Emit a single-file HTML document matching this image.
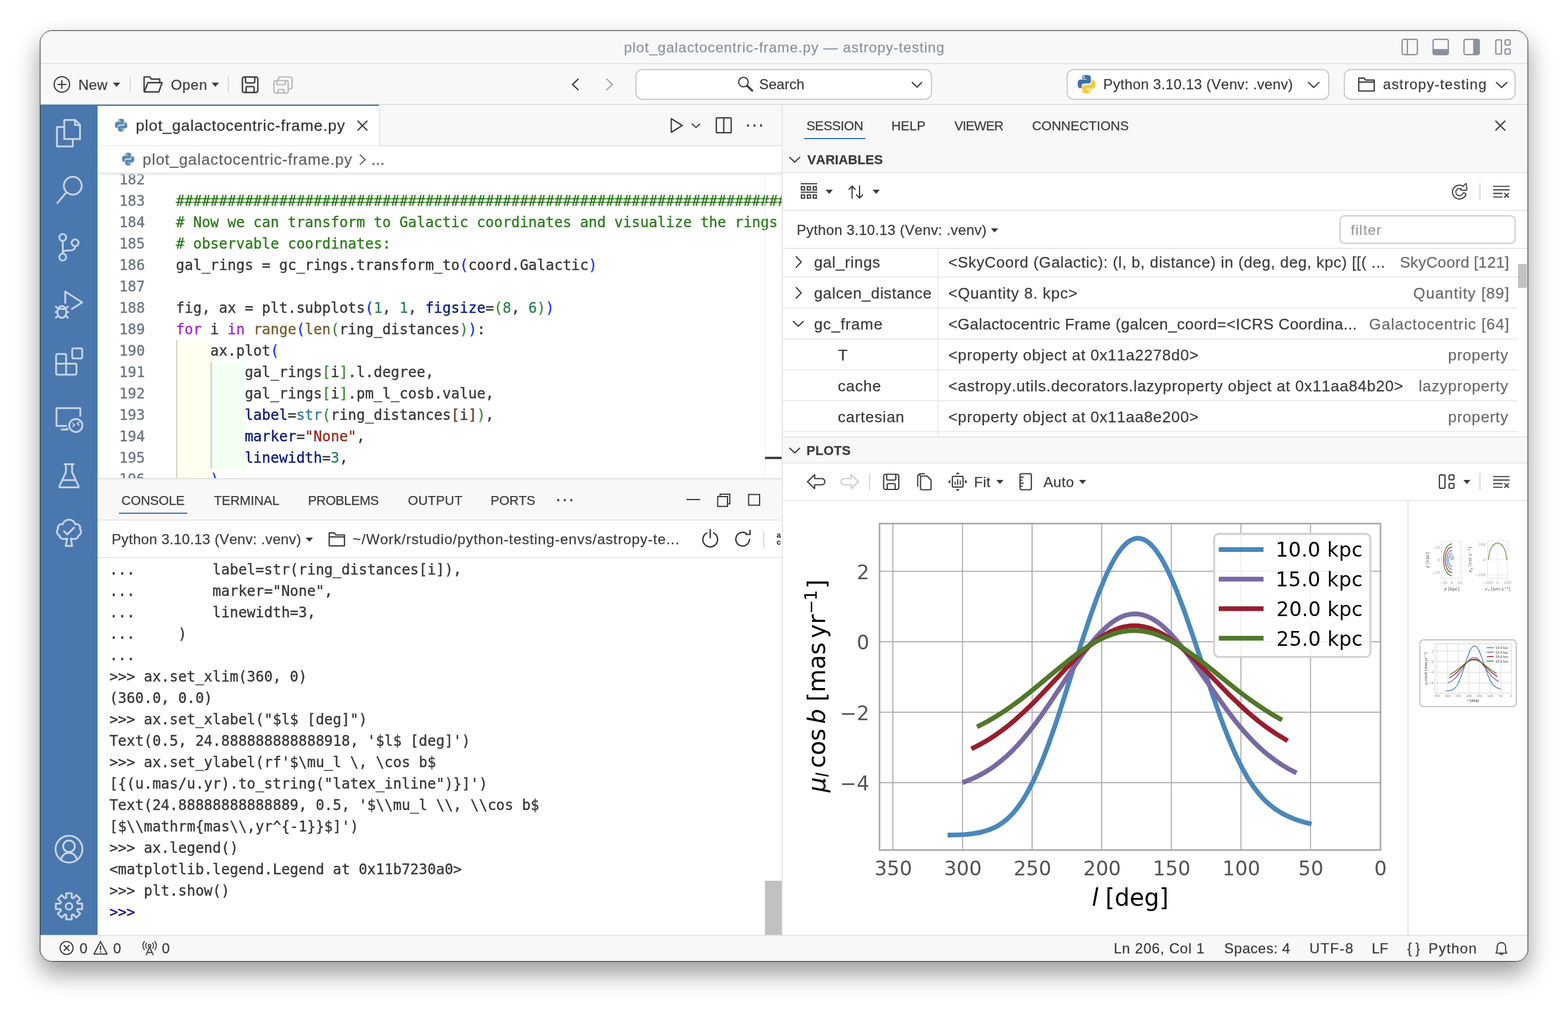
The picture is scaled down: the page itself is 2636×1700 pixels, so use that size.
<!DOCTYPE html>
<html lang="en"><head><meta charset="utf-8"><title>plot_galactocentric-frame.py — astropy-testing</title>
<style>
html,body{margin:0;padding:0;background:#fff;}
body{width:2636px;height:1700px;overflow:hidden;position:relative;font-family:"Liberation Sans",sans-serif;font-kerning:none;-webkit-font-smoothing:antialiased;}
#win{position:absolute;left:67px;top:51px;width:2500px;height:1564px;border:1px solid #2e2e2e;border-radius:21px;overflow:hidden;background:#f8f8f8;box-shadow:0 20px 40px rgba(0,0,0,0.40),0 0 3px rgba(0,0,0,0.15);}
#pg{position:absolute;left:-68px;top:-52px;width:2636px;height:1700px;will-change:transform;}
.t{position:absolute;white-space:pre;line-height:normal;-webkit-text-stroke:0.25px currentColor;}
.m{font-family:"DejaVu Sans Mono","Liberation Mono",monospace;}

.cl{position:absolute;left:0;white-space:pre;font-family:"DejaVu Sans Mono","Liberation Mono",monospace;font-size:24px;line-height:36px;height:36px;letter-spacing:0.003px;-webkit-text-stroke:0.4px currentColor;}
.ln{position:absolute;white-space:pre;font-family:"DejaVu Sans Mono","Liberation Mono",monospace;font-size:24px;line-height:36px;height:36px;color:#6e7681;text-align:right;width:60px;-webkit-text-stroke:0.4px currentColor;}
.cd{color:#383838}.cc{color:#2c7c1c}.ck{color:#a626d4}.cf{color:#785f2c}.cb1{color:#1a3af0}.cb2{color:#3c913a}.cb3{color:#76391c}.cn{color:#2a8459}.cp{color:#0a1a7d}.ct{color:#357e97}.cs{color:#962a1f}
.co{position:absolute;left:183.9px;white-space:pre;font-family:"DejaVu Sans Mono","Liberation Mono",monospace;font-size:24px;line-height:36px;height:36px;color:#383838;-webkit-text-stroke:0.4px currentColor;}
</style></head>
<body><div id="win"><div id="pg">
<div style="position:absolute;left:68px;top:52px;width:2500px;height:54px;background:#f8f8f8;"></div><div style="position:absolute;left:68px;top:106px;width:2500px;height:2px;background:#e5e5e5;"></div><span class="t" style="left:1049.06px;top:66.00px;font-size:24px;color:#8b949e;letter-spacing:0.937px;">plot_galactocentric-frame.py — astropy-testing</span><svg style="position:absolute;left:2356px;top:65px;" width="28" height="28" viewBox="0 0 28 28" fill="none"><rect x="1.2" y="1.2" width="25.6" height="25.6" rx="3" stroke="#8b929e" stroke-width="2.2"/><path d="M10 1.2V26.8" stroke="#8b929e" stroke-width="2.2"/></svg><svg style="position:absolute;left:2408px;top:65px;" width="28" height="28" viewBox="0 0 28 28" fill="none"><rect x="1.2" y="1.2" width="25.6" height="25.6" rx="3" stroke="#8b929e" stroke-width="2.2"/><path d="M1.2 17.5H26.8V24A3 3 0 0 1 23.8 26.8H4.2A3 3 0 0 1 1.2 24Z" fill="#8b929e"/></svg><svg style="position:absolute;left:2460px;top:65px;" width="28" height="28" viewBox="0 0 28 28" fill="none"><rect x="1.2" y="1.2" width="25.6" height="25.6" rx="3" stroke="#8b929e" stroke-width="2.2"/><path d="M16.5 1.2H24A3 3 0 0 1 26.8 4.2V23.8A3 3 0 0 1 24 26.8H16.5Z" fill="#8b929e"/></svg><svg style="position:absolute;left:2513px;top:65px;" width="28" height="28" viewBox="0 0 28 28" fill="none"><rect x="1.6" y="2" width="9.5" height="24" rx="2" stroke="#8b929e" stroke-width="2.2"/><rect x="17.2" y="2" width="8.6" height="8.6" rx="2" stroke="#8b929e" stroke-width="2.2"/><rect x="17.2" y="17.4" width="8.6" height="8.6" rx="2" stroke="#8b929e" stroke-width="2.2"/></svg><div style="position:absolute;left:68px;top:108px;width:2500px;height:68px;background:#f8f8f8;"></div><div style="position:absolute;left:68px;top:175px;width:2500px;height:1px;background:#ccd1d6;"></div><svg style="position:absolute;left:89px;top:127px;" width="30" height="30" viewBox="0 0 30 30" fill="none"><circle cx="15" cy="15" r="13" stroke="#3b3b3b" stroke-width="2"/><path d="M15 7.5V22.5M7.5 15H22.5" stroke="#3b3b3b" stroke-width="2"/></svg><span class="t" style="left:131.73px;top:129.00px;font-size:24px;color:#3b3b3b;letter-spacing:0.448px;">New</span><svg style="position:absolute;left:190.3px;top:138.5px;" width="12" height="7" viewBox="0 0 12 7" fill="none"><path d="M0 0H12L6.0 7Z" fill="#3b3b3b"/></svg><div style="position:absolute;left:218px;top:128px;width:2px;height:27px;background:#d4d9df;"></div><svg style="position:absolute;left:241px;top:128px;" width="33" height="28" viewBox="0 0 33 28" fill="none"><path d="M1.3 26.5V1.3H11L13.5 5H27.5V11" stroke="#3b3b3b" stroke-width="2.3" stroke-linejoin="round"/><path d="M1.5 26.5L7.5 11H31.5L26 26.5Z" stroke="#3b3b3b" stroke-width="2.3" stroke-linejoin="round"/></svg><span class="t" style="left:287.17px;top:129.00px;font-size:24px;color:#3b3b3b;letter-spacing:0.720px;">Open</span><svg style="position:absolute;left:356.0px;top:138.5px;" width="12" height="7" viewBox="0 0 12 7" fill="none"><path d="M0 0H12L6.0 7Z" fill="#3b3b3b"/></svg><div style="position:absolute;left:383.3px;top:128px;width:2px;height:27px;background:#d4d9df;"></div><svg style="position:absolute;left:405.5px;top:127.5px;" width="29" height="29" viewBox="0 0 28 28" fill="none"><path d="M4.5 1.5H23.5A3 3 0 0 1 26.5 4.5V23.5A3 3 0 0 1 23.5 26.5H4.5A3 3 0 0 1 1.5 23.5V4.5A3 3 0 0 1 4.5 1.5Z" stroke="#3b3b3b" stroke-width="2.3"/><path d="M6.5 1.5V9A2 2 0 0 0 8.5 11H19.5A2 2 0 0 0 21.5 9V1.5" stroke="#3b3b3b" stroke-width="2.3"/><path d="M7.5 26.5V19A2 2 0 0 1 9.5 17H18.5A2 2 0 0 1 20.5 19V26.5" stroke="#3b3b3b" stroke-width="2.3"/></svg><svg style="position:absolute;left:459px;top:128px;" width="34" height="30" viewBox="0 0 34 30" fill="none"><path d="M9 7V4.5A3 3 0 0 1 12 1.5H29A3 3 0 0 1 32 4.5V18.5A3 3 0 0 1 29 21.5H26" stroke="#b4b4b4" stroke-width="2.2"/><rect x="1.5" y="7.5" width="24" height="21" rx="3" stroke="#b4b4b4" stroke-width="2.2"/><path d="M6.5 7.5V13A1.5 1.5 0 0 0 8 14.5H19A1.5 1.5 0 0 0 20.5 13V7.5M8.5 28.5V24A1.5 1.5 0 0 1 10 22.5H17A1.5 1.5 0 0 1 18.5 24V28.5" stroke="#b4b4b4" stroke-width="2.2"/></svg><svg style="position:absolute;left:958px;top:130px;" width="18" height="24" viewBox="0 0 18 24" fill="none"><path d="M14.5 2.5L4.5 12L14.5 21.5" stroke="#3b3b3b" stroke-width="2.2"/></svg><svg style="position:absolute;left:1016px;top:130px;" width="18" height="24" viewBox="0 0 18 24" fill="none"><path d="M3.5 2.5L13.5 12L3.5 21.5" stroke="#a6a6a6" stroke-width="2.2"/></svg><div style="position:absolute;left:1068px;top:116px;width:499px;height:52px;box-sizing:border-box;background:#fff;border:2px solid #cbcbcb;border-radius:12px;"></div><svg style="position:absolute;left:1239px;top:127px;" width="30" height="30" viewBox="0 0 30 30" fill="none"><circle cx="10.8" cy="11" r="8" stroke="#3b3b3b" stroke-width="2.1"/><path d="M17.3 17.4L25.6 25.4" stroke="#3b3b3b" stroke-width="3.5" stroke-linecap="round"/></svg><span class="t" style="left:1276.22px;top:128.00px;font-size:24px;color:#3b3b3b;">Search</span><svg style="position:absolute;left:1531.0px;top:135.75px;" width="21" height="13.5" viewBox="0 0 21 13.5" fill="none"><path d="M2 2L10.5 10.5L19 2" stroke="#3b3b3b" stroke-width="2" stroke-linejoin="miter"/></svg><div style="position:absolute;left:1793px;top:116px;width:442px;height:52px;box-sizing:border-box;background:#fff;border:2px solid #cbcbcb;border-radius:12px;"></div><svg style="position:absolute;left:1810.4px;top:124.8px;" width="33.2" height="33.2" viewBox="0 0 32 32" fill="none"><path d="M15.9 1C8.6 1 9.1 4.2 9.1 4.2V7.5H16.1V8.5H6.3S1.6 8 1.6 15.4S5.7 22.5 5.7 22.5H8.1V19.1S8 15 12.2 15H19.1S23 15.1 23 11.2V4.8S23.6 1 15.9 1Z" fill="#3d74a8"/><circle cx="12" cy="4.4" r="1.3" fill="#fff"/><path d="M16.1 31C23.4 31 22.9 27.8 22.9 27.8V24.5H15.9V23.5H25.7S30.4 24 30.4 16.6S26.3 9.5 26.3 9.5H23.9V12.9S24 17 19.8 17H12.9S9 16.9 9 20.8V27.2S8.4 31 16.1 31Z" fill="#f7cb3f"/><circle cx="20" cy="27.6" r="1.3" fill="#fff"/></svg><span class="t" style="left:1854.83px;top:128.00px;font-size:24px;color:#3b3b3b;letter-spacing:0.340px;">Python 3.10.13 (Venv: .venv)</span><svg style="position:absolute;left:2197.0px;top:135.5px;" width="23" height="14" viewBox="0 0 23 14" fill="none"><path d="M2 2L11.5 11L21 2" stroke="#3b3b3b" stroke-width="2" stroke-linejoin="miter"/></svg><div style="position:absolute;left:2259px;top:116px;width:289px;height:52px;box-sizing:border-box;background:#fff;border:2px solid #cbcbcb;border-radius:12px;"></div><svg style="position:absolute;left:2283px;top:129.5px;" width="28.5" height="24.5" viewBox="0 0 28 24" fill="none"><path d="M1.2 22.8V1.2H10L12.5 4.5H26.8V22.8Z" stroke="#3b3b3b" stroke-width="2.2" stroke-linejoin="round"/><path d="M1.2 7.8H26.8" stroke="#3b3b3b" stroke-width="2.2"/></svg><span class="t" style="left:2324.89px;top:128.00px;font-size:24px;color:#3b3b3b;letter-spacing:1.175px;">astropy-testing</span><svg style="position:absolute;left:2512.5px;top:135.5px;" width="23" height="14" viewBox="0 0 23 14" fill="none"><path d="M2 2L11.5 11L21 2" stroke="#3b3b3b" stroke-width="2" stroke-linejoin="miter"/></svg><div style="position:absolute;left:68px;top:176px;width:96px;height:1396px;background:#4a77ae;"></div><svg style="position:absolute;left:68px;top:176px" width="96" height="1396" viewBox="68 176 96 1396"><path d="M108 201.8H126.5L134.5 209.8V233.8H108Z" stroke="#c9d6e7" stroke-width="3" fill="none" stroke-linejoin="round"/><path d="M126 201.8V210.3H134.5" stroke="#c9d6e7" stroke-width="3" fill="none" stroke-linejoin="round"/><path d="M108 213.5H95.8V246.3H122.4V233.8" stroke="#c9d6e7" stroke-width="3" fill="none" stroke-linejoin="round"/><circle cx="122.4" cy="312.3" r="15" stroke="#c9d6e7" stroke-width="3" fill="none" stroke-linejoin="round"/><path d="M111.8 323.2L95.5 342.4" stroke="#c9d6e7" stroke-width="3" fill="none" stroke-linejoin="round"/><circle cx="105.5" cy="399.3" r="5.8" stroke="#c9d6e7" stroke-width="3" fill="none" stroke-linejoin="round"/><circle cx="126.3" cy="408.3" r="5.8" stroke="#c9d6e7" stroke-width="3" fill="none" stroke-linejoin="round"/><circle cx="105.5" cy="432.4" r="5.8" stroke="#c9d6e7" stroke-width="3" fill="none" stroke-linejoin="round"/><path d="M105.5 405.1V426.6" stroke="#c9d6e7" stroke-width="3" fill="none" stroke-linejoin="round"/><path d="M126.3 414.1C126.3 421 120 421.3 112 421.3C108 421.3 105.5 423 105.5 426.6" stroke="#c9d6e7" stroke-width="3" fill="none" stroke-linejoin="round"/><path d="M109.7 510.5V490.2L138.2 508.4L119.8 520.3" stroke="#c9d6e7" stroke-width="3" fill="none" stroke-linejoin="round" stroke-linejoin="miter"/><ellipse cx="104" cy="524.6" rx="7.6" ry="9.8" stroke="#c9d6e7" stroke-width="3" fill="none" stroke-linejoin="round"/><path d="M97 519.5H111" stroke="#c9d6e7" stroke-width="3" fill="none" stroke-linejoin="round"/><path d="M92.2 524.8H96.4M111.6 524.8H115.8M93 515L97.6 518.8M115 515L110.4 518.8M93 535L97.8 531M115 535L110.2 531" stroke="#c9d6e7" stroke-width="3" fill="none" stroke-linejoin="round"/><path d="M96.8 595.2H108.7A2.5 2.5 0 0 1 111.2 597.7V611.6H126.1A2.5 2.5 0 0 1 128.6 614.1V627.5A2.5 2.5 0 0 1 126.1 630H96.8A2.5 2.5 0 0 1 94.3 627.5V597.7A2.5 2.5 0 0 1 96.8 595.2Z" stroke="#c9d6e7" stroke-width="3" fill="none" stroke-linejoin="round"/><path d="M94.3 611.6H111.2V630" stroke="#c9d6e7" stroke-width="3" fill="none" stroke-linejoin="round"/><rect x="121.4" y="585.8" width="16.8" height="17" rx="2.5" stroke="#c9d6e7" stroke-width="3" fill="none" stroke-linejoin="round"/><path d="M135 700.5V686.2H95V716.3H112.5" stroke="#c9d6e7" stroke-width="3" fill="none" stroke-linejoin="round" stroke-linejoin="miter"/><path d="M102.5 722.3H113.5L112.5 719.5" stroke="#c9d6e7" stroke-width="3" fill="none" stroke-linejoin="round" stroke-width="2.6"/><circle cx="127.5" cy="715.4" r="11" stroke="#c9d6e7" stroke-width="3" fill="none" stroke-linejoin="round"/><path d="M122 711.8L125.4 714.6L122 717.6M133.4 709.6L129.8 712.6L133.4 715.6" stroke="#c9d6e7" stroke-width="2" fill="none"/><path d="M107 780.6H125M110.8 780.6V794L99.8 817.6A1.2 1.2 0 0 0 101 819.4H131A1.2 1.2 0 0 0 132.2 817.6L121.2 794V780.6" stroke="#c9d6e7" stroke-width="3" fill="none" stroke-linejoin="round"/><path d="M104.6 807.3H127.4" stroke="#c9d6e7" stroke-width="3" fill="none" stroke-linejoin="round"/><path d="M110.6 918L113 905.5C106 908 100.5 905 100 900.5C95.5 899 94.5 893 97.5 889.5C96 884.5 100.5 880 105.5 881.5C107 876.5 111.5 873.5 116 874C120.5 873.5 125 876.5 126.5 881.5C131.5 880 136 884.5 134.5 889.5C137.5 893 136.5 899 132 900.5C131.5 905 126 908 119 905.5L121.4 918Z" stroke="#c9d6e7" stroke-width="3" fill="none" stroke-linejoin="round" stroke-width="2.8"/><path d="M106.8 892.5L113.2 898.6L125.2 886.4" stroke="#c9d6e7" stroke-width="3" fill="none" stroke-linejoin="round" stroke-width="2.8" stroke-linejoin="miter"/><circle cx="116" cy="1427.8" r="22.6" stroke="#c9d6e7" stroke-width="3" fill="none" stroke-linejoin="round"/><circle cx="116" cy="1423" r="9.8" stroke="#c9d6e7" stroke-width="3" fill="none" stroke-linejoin="round"/><path d="M102.4 1445.5C104.5 1438.5 109.5 1434 116 1434C122.5 1434 127.5 1438.5 129.6 1445.5" stroke="#c9d6e7" stroke-width="3" fill="none" stroke-linejoin="round"/><path d="M111.51 1509.48L111.29 1501.90L120.71 1501.90L120.49 1509.48L123.09 1510.56L128.30 1505.04L134.96 1511.70L129.44 1516.91L130.52 1519.51L138.10 1519.29L138.10 1528.71L130.52 1528.49L129.44 1531.09L134.96 1536.30L128.30 1542.96L123.09 1537.44L120.49 1538.52L120.71 1546.10L111.29 1546.10L111.51 1538.52L108.91 1537.44L103.70 1542.96L97.04 1536.30L102.56 1531.09L101.48 1528.49L93.90 1528.71L93.90 1519.29L101.48 1519.51L102.56 1516.91L97.04 1511.70L103.70 1505.04L108.91 1510.56Z" stroke="#c9d6e7" stroke-width="3" fill="none" stroke-linejoin="round" stroke-linejoin="miter"/><circle cx="116" cy="1524" r="5.5" stroke="#c9d6e7" stroke-width="3" fill="none" stroke-linejoin="round"/></svg><div style="position:absolute;left:164px;top:176px;width:1150px;height:68px;background:#f8f8f8;"></div><div style="position:absolute;left:164px;top:244px;width:1150px;height:2px;background:#e5e5e5;"></div><div style="position:absolute;left:164px;top:176px;width:473px;height:70px;background:#fff;"></div><div style="position:absolute;left:164px;top:244px;width:473px;height:2px;background:#f1f1f1;"></div><div style="position:absolute;left:164px;top:176px;width:473px;height:2px;background:#3d73b4;"></div><div style="position:absolute;left:637px;top:178px;width:2px;height:68px;background:#e5e5e5;"></div><svg style="position:absolute;left:192.2px;top:199.3px;" width="23" height="23" viewBox="0 0 32 32" fill="none"><path d="M15.9 1C8.6 1 9.1 4.2 9.1 4.2V7.5H16.1V8.5H6.3S1.6 8 1.6 15.4S5.7 22.5 5.7 22.5H8.1V19.1S8 15 12.2 15H19.1S23 15.1 23 11.2V4.8S23.6 1 15.9 1Z" fill="#5a8bb0"/><circle cx="12" cy="4.4" r="1.4" fill="#fff"/><path d="M16.1 31C23.4 31 22.9 27.8 22.9 27.8V24.5H15.9V23.5H25.7S30.4 24 30.4 16.6S26.3 9.5 26.3 9.5H23.9V12.9S24 17 19.8 17H12.9S9 16.9 9 20.8V27.2S8.4 31 16.1 31Z" fill="#5a8bb0"/><circle cx="20" cy="27.6" r="1.4" fill="#fff"/></svg><span class="t" style="left:228.24px;top:196.00px;font-size:26px;color:#333;letter-spacing:0.922px;">plot_galactocentric-frame.py</span><svg style="position:absolute;left:599.25px;top:200.95px;" width="20.5" height="20.5" viewBox="0 0 20.5 20.5" fill="none"><path d="M2 2L18.5 18.5M18.5 2L2 18.5" stroke="#3b3b3b" stroke-width="2.2"/></svg><svg style="position:absolute;left:1125px;top:196px;" width="26" height="30" viewBox="0 0 26 30" fill="none"><path d="M3.5 3.5V26.5L22 15Z" stroke="#3b3b3b" stroke-width="2.2" stroke-linejoin="round"/></svg><svg style="position:absolute;left:1161.0px;top:206.25px;" width="18" height="11.5" viewBox="0 0 18 11.5" fill="none"><path d="M2 2L9.0 8.5L16 2" stroke="#3b3b3b" stroke-width="1.8" stroke-linejoin="miter"/></svg><svg style="position:absolute;left:1203px;top:196.5px;" width="28" height="28" viewBox="0 0 28 28" fill="none"><rect x="1.2" y="1.2" width="25" height="25" rx="1.5" stroke="#3b3b3b" stroke-width="2.2"/><path d="M13.7 1.2V26.2" stroke="#3b3b3b" stroke-width="2.2"/></svg><svg style="position:absolute;left:1254px;top:207px;" width="30" height="8" viewBox="0 0 30 8" fill="none"><circle cx="3.5" cy="4" r="1.9" fill="#3b3b3b"/><circle cx="14.5" cy="4" r="1.9" fill="#3b3b3b"/><circle cx="25.5" cy="4" r="1.9" fill="#3b3b3b"/></svg><div style="position:absolute;left:164px;top:246px;width:1150px;height:44px;background:#fff;"></div><svg style="position:absolute;left:204.2px;top:256.4px;" width="23" height="23" viewBox="0 0 32 32" fill="none"><path d="M15.9 1C8.6 1 9.1 4.2 9.1 4.2V7.5H16.1V8.5H6.3S1.6 8 1.6 15.4S5.7 22.5 5.7 22.5H8.1V19.1S8 15 12.2 15H19.1S23 15.1 23 11.2V4.8S23.6 1 15.9 1Z" fill="#5a8bb0"/><circle cx="12" cy="4.4" r="1.4" fill="#fff"/><path d="M16.1 31C23.4 31 22.9 27.8 22.9 27.8V24.5H15.9V23.5H25.7S30.4 24 30.4 16.6S26.3 9.5 26.3 9.5H23.9V12.9S24 17 19.8 17H12.9S9 16.9 9 20.8V27.2S8.4 31 16.1 31Z" fill="#5a8bb0"/><circle cx="20" cy="27.6" r="1.4" fill="#fff"/></svg><span class="t" style="left:239.84px;top:253.00px;font-size:26px;color:#616161;letter-spacing:0.937px;">plot_galactocentric-frame.py</span><svg style="position:absolute;left:602px;top:257px;" width="16" height="24" viewBox="0 0 16 24" fill="none"><path d="M3 3L12 11.5L3 20" stroke="#616161" stroke-width="2"/></svg><span class="t" style="left:624.05px;top:252.00px;font-size:28px;color:#616161;letter-spacing:-0.278px;">...</span><div style="position:absolute;left:164px;top:290px;width:1150px;height:514px;background:#fff;overflow:hidden"><div style="position:absolute;left:-164px;top:0"><div style="position:absolute;left:296px;top:282.0px;width:58px;height:246px;background:#fffff0;"></div><div style="position:absolute;left:296px;top:282.0px;width:2px;height:246px;background:#d2d2bf;"></div><div style="position:absolute;left:354px;top:318.0px;width:58px;height:180px;background:#f4fff4;"></div><div style="position:absolute;left:354px;top:318.0px;width:2px;height:180px;background:#c3cfc3;"></div><div class="ln" style="left:183.6px;top:-6.0px">182</div><div class="ln" style="left:183.6px;top:30.0px">183</div><div class="cl" style="left:295.8px;top:30.0px"><span class="cc">########################################################################</span></div><div class="ln" style="left:183.6px;top:66.0px">184</div><div class="cl" style="left:295.8px;top:66.0px"><span class="cc"># Now we can transform to Galactic coordinates and visualize the rings in</span></div><div class="ln" style="left:183.6px;top:102.0px">185</div><div class="cl" style="left:295.8px;top:102.0px"><span class="cc"># observable coordinates:</span></div><div class="ln" style="left:183.6px;top:138.0px">186</div><div class="cl" style="left:295.8px;top:138.0px"><span class="cd">gal_rings = gc_rings.transform_to</span><span class="cb1">(</span><span class="cd">coord.Galactic</span><span class="cb1">)</span></div><div class="ln" style="left:183.6px;top:174.0px">187</div><div class="ln" style="left:183.6px;top:210.0px">188</div><div class="cl" style="left:295.8px;top:210.0px"><span class="cd">fig, ax = plt.subplots</span><span class="cb1">(</span><span class="cn">1</span><span class="cd">, </span><span class="cn">1</span><span class="cd">, </span><span class="cp">figsize</span><span class="cd">=</span><span class="cb2">(</span><span class="cn">8</span><span class="cd">, </span><span class="cn">6</span><span class="cb2">)</span><span class="cb1">)</span></div><div class="ln" style="left:183.6px;top:246.0px">189</div><div class="cl" style="left:295.8px;top:246.0px"><span class="ck">for</span><span class="cd"> i </span><span class="ck">in</span><span class="cd"> </span><span class="cf">range</span><span class="cb1">(</span><span class="cf">len</span><span class="cb2">(</span><span class="cd">ring_distances</span><span class="cb2">)</span><span class="cb1">)</span><span class="cd">:</span></div><div class="ln" style="left:183.6px;top:282.0px">190</div><div class="cl" style="left:295.8px;top:282.0px"><span class="cd">    ax.plot</span><span class="cb1">(</span></div><div class="ln" style="left:183.6px;top:318.0px">191</div><div class="cl" style="left:295.8px;top:318.0px"><span class="cd">        gal_rings</span><span class="cb2">[</span><span class="cd">i</span><span class="cb2">]</span><span class="cd">.l.degree,</span></div><div class="ln" style="left:183.6px;top:354.0px">192</div><div class="cl" style="left:295.8px;top:354.0px"><span class="cd">        gal_rings</span><span class="cb2">[</span><span class="cd">i</span><span class="cb2">]</span><span class="cd">.pm_l_cosb.value,</span></div><div class="ln" style="left:183.6px;top:390.0px">193</div><div class="cl" style="left:295.8px;top:390.0px"><span class="cd">        </span><span class="cp">label</span><span class="cd">=</span><span class="ct">str</span><span class="cb2">(</span><span class="cd">ring_distances</span><span class="cb3">[</span><span class="cd">i</span><span class="cb3">]</span><span class="cb2">)</span><span class="cd">,</span></div><div class="ln" style="left:183.6px;top:426.0px">194</div><div class="cl" style="left:295.8px;top:426.0px"><span class="cd">        </span><span class="cp">marker</span><span class="cd">=</span><span class="cs">"None"</span><span class="cd">,</span></div><div class="ln" style="left:183.6px;top:462.0px">195</div><div class="cl" style="left:295.8px;top:462.0px"><span class="cd">        </span><span class="cp">linewidth</span><span class="cd">=</span><span class="cn">3</span><span class="cd">,</span></div><div class="ln" style="left:183.6px;top:498.0px">196</div><div class="cl" style="left:295.8px;top:498.0px"><span class="cd">    </span><span class="cb1">)</span></div><div style="position:absolute;left:164px;top:0px;width:1150px;height:7px;background:linear-gradient(#e6e6e6,rgba(255,255,255,0));"></div><div style="position:absolute;left:1286px;top:0px;width:1px;height:514px;background:#ededed;"></div><div style="position:absolute;left:1286px;top:478px;width:28px;height:4px;background:#424242;"></div></div></div><div style="position:absolute;left:1314px;top:176px;width:2px;height:1396px;background:#e5e5e5;"></div><div style="position:absolute;left:164px;top:804px;width:1150px;height:2px;background:#e2e2e2;"></div><div style="position:absolute;left:164px;top:806px;width:1150px;height:68px;background:#f8f8f8;"></div><div style="position:absolute;left:164px;top:874px;width:1150px;height:1px;background:#d6dae0;"></div><span class="t" style="left:204.10px;top:829.00px;font-size:22px;color:#3b3b3b;letter-spacing:-0.209px;">CONSOLE</span><span class="t" style="left:359.42px;top:829.00px;font-size:22px;color:#3b3b3b;letter-spacing:-0.132px;">TERMINAL</span><span class="t" style="left:517.70px;top:829.00px;font-size:22px;color:#3b3b3b;letter-spacing:-0.423px;">PROBLEMS</span><span class="t" style="left:685.87px;top:829.00px;font-size:22px;color:#3b3b3b;letter-spacing:0.220px;">OUTPUT</span><span class="t" style="left:824.70px;top:829.00px;font-size:22px;color:#3b3b3b;letter-spacing:-0.125px;">PORTS</span><div style="position:absolute;left:200px;top:861.5px;width:115px;height:2px;background:#3d73b4;"></div><svg style="position:absolute;left:935px;top:837px;" width="30" height="8" viewBox="0 0 30 8" fill="none"><circle cx="3.5" cy="4" r="1.9" fill="#3b3b3b"/><circle cx="14.5" cy="4" r="1.9" fill="#3b3b3b"/><circle cx="25.5" cy="4" r="1.9" fill="#3b3b3b"/></svg><div style="position:absolute;left:1154px;top:839.3px;width:22.5px;height:2.2px;background:#3b3b3b;"></div><svg style="position:absolute;left:1205px;top:829px;" width="24" height="24" viewBox="0 0 24 24" fill="none"><path d="M5.5 5V2H21.8V18.2H18.5" stroke="#3b3b3b" stroke-width="2"/><rect x="1.5" y="6" width="16.5" height="16.5" stroke="#3b3b3b" stroke-width="2"/></svg><svg style="position:absolute;left:1257px;top:829.5px;" width="22" height="22" viewBox="0 0 22 22" fill="none"><rect x="1.5" y="1.5" width="18.5" height="18" stroke="#3b3b3b" stroke-width="2"/></svg><div style="position:absolute;left:164px;top:875px;width:1150px;height:62px;background:#fff;"></div><div style="position:absolute;left:164px;top:937px;width:1150px;height:1px;background:#d6dae0;"></div><span class="t" style="left:187.73px;top:893.00px;font-size:24px;color:#3b3b3b;letter-spacing:0.329px;">Python 3.10.13 (Venv: .venv)</span><svg style="position:absolute;left:514.0px;top:904.0px;" width="12" height="7" viewBox="0 0 12 7" fill="none"><path d="M0 0H12L6.0 7Z" fill="#3b3b3b"/></svg><svg style="position:absolute;left:552px;top:894.5px;" width="28.5" height="24" viewBox="0 0 28 24" fill="none"><path d="M1.2 22.8V1.2H10L12.5 4.5H26.8V22.8Z" stroke="#3b3b3b" stroke-width="2.2" stroke-linejoin="round"/><path d="M1.2 7.8H26.8" stroke="#3b3b3b" stroke-width="2.2"/></svg><span class="t" style="left:592.84px;top:893.00px;font-size:24px;color:#3b3b3b;letter-spacing:0.940px;">~/Work/rstudio/python-testing-envs/astropy-te...</span><svg style="position:absolute;left:1178px;top:889px;" width="32" height="32" viewBox="0 0 32 32" fill="none"><path d="M10.3 7.2A12.4 12.4 0 1 0 21.7 7.2" stroke="#3b3b3b" stroke-width="2.4" stroke-linecap="round"/><path d="M16 1.5V15" stroke="#3b3b3b" stroke-width="2.4" stroke-linecap="round"/></svg><svg style="position:absolute;left:1234px;top:890px;" width="32" height="32" viewBox="0 0 32 32" fill="none"><path d="M26 17A11.5 11.5 0 1 1 20.5 6.8" stroke="#3b3b3b" stroke-width="2.4" stroke-linecap="round"/><path d="M19 8.6H26.8V1" stroke="#3b3b3b" stroke-width="2.4" stroke-linejoin="miter"/></svg><div style="position:absolute;left:1283.3px;top:893px;width:2px;height:27px;background:#d4d9df;"></div><span class="t" style="left:1305.52px;top:892.00px;font-size:13px;color:#3b3b3b;font-weight:700;font-size:13px;">a</span><span class="t" style="left:1305.39px;top:904.00px;font-size:13px;color:#3b3b3b;font-weight:700;">c</span><div style="position:absolute;left:164px;top:938px;width:1150px;height:634px;background:#fff;overflow:hidden"><div style="position:absolute;left:-164px;top:0"><div class="co" style="top:2.2px;left:183.9px">...         label=str(ring_distances[i]),</div><div class="co" style="top:38.2px;left:183.9px">...         marker="None",</div><div class="co" style="top:74.2px;left:183.9px">...         linewidth=3,</div><div class="co" style="top:110.2px;left:183.9px">...     )</div><div class="co" style="top:146.2px;left:183.9px">... </div><div class="co" style="top:182.2px;left:183.9px">&gt;&gt;&gt; ax.set_xlim(360, 0)</div><div class="co" style="top:218.2px;left:183.9px">(360.0, 0.0)</div><div class="co" style="top:254.2px;left:183.9px">&gt;&gt;&gt; ax.set_xlabel("$l$ [deg]")</div><div class="co" style="top:290.2px;left:183.9px">Text(0.5, 24.888888888888918, '$l$ [deg]')</div><div class="co" style="top:326.2px;left:183.9px">&gt;&gt;&gt; ax.set_ylabel(rf'$\mu_l \, \cos b$ </div><div class="co" style="top:362.2px;left:183.9px">[{(u.mas/u.yr).to_string("latex_inline")}]')</div><div class="co" style="top:398.2px;left:183.9px">Text(24.88888888888889, 0.5, '$\\mu_l \\, \\cos b$ </div><div class="co" style="top:434.2px;left:183.9px">[$\\mathrm{mas\\,yr^{-1}}$]')</div><div class="co" style="top:470.2px;left:183.9px">&gt;&gt;&gt; ax.legend()</div><div class="co" style="top:506.2px;left:183.9px">&lt;matplotlib.legend.Legend at 0x11b7230a0&gt;</div><div class="co" style="top:542.2px;left:183.9px">&gt;&gt;&gt; plt.show()</div><div class="co" style="top:578.2px;left:183.9px;color:#10109a">&gt;&gt;&gt; </div><div style="position:absolute;left:1286px;top:543px;width:28px;height:92px;background:#c1c1c1;"></div></div></div><div style="position:absolute;left:1316px;top:176px;width:1252px;height:116px;background:#f8f8f8;"></div><span class="t" style="left:1355.81px;top:199.00px;font-size:22px;color:#3b3b3b;letter-spacing:-0.357px;">SESSION</span><span class="t" style="left:1498.40px;top:199.00px;font-size:22px;color:#3b3b3b;letter-spacing:-0.005px;">HELP</span><span class="t" style="left:1604.41px;top:199.00px;font-size:22px;color:#3b3b3b;letter-spacing:-0.798px;">VIEWER</span><span class="t" style="left:1734.90px;top:199.00px;font-size:22px;color:#3b3b3b;letter-spacing:0.023px;">CONNECTIONS</span><div style="position:absolute;left:1352px;top:231.5px;width:103px;height:2px;background:#3d73b4;"></div><svg style="position:absolute;left:2512.05px;top:200.55px;" width="20.5" height="20.5" viewBox="0 0 20.5 20.5" fill="none"><path d="M2 2L18.5 18.5M18.5 2L2 18.5" stroke="#3b3b3b" stroke-width="2.2"/></svg><svg style="position:absolute;left:1324.8px;top:261.85px;" width="22" height="13.5" viewBox="0 0 22 13.5" fill="none"><path d="M2 2L11.0 10.5L20 2" stroke="#3b3b3b" stroke-width="2" stroke-linejoin="miter"/></svg><span class="t" style="left:1357.17px;top:256.00px;font-size:22px;color:#3b3b3b;font-weight:700;letter-spacing:-0.012px;">VARIABLES</span><div style="position:absolute;left:1316px;top:290px;width:1252px;height:1px;background:#d6dae0;"></div><div style="position:absolute;left:1316px;top:291px;width:1252px;height:62px;background:#fff;"></div><div style="position:absolute;left:1316px;top:353px;width:1252px;height:1px;background:#d6dae0;"></div><svg style="position:absolute;left:1346px;top:306.5px;" width="28" height="30" viewBox="0 0 28 30" fill="none"><path d="M0.2 2.0H27.8" stroke="#3b3b3b" stroke-width="1.9"/><rect x="1.2" y="7.1" width="5.4" height="5.4" stroke="#3b3b3b" stroke-width="2"/><rect x="11.1" y="7.1" width="5.4" height="5.4" stroke="#3b3b3b" stroke-width="2"/><rect x="21.0" y="7.1" width="5.4" height="5.4" stroke="#3b3b3b" stroke-width="2"/><path d="M0.2 16.3H27.8" stroke="#3b3b3b" stroke-width="1.9"/><rect x="1.2" y="20.8" width="5.4" height="5.4" stroke="#3b3b3b" stroke-width="2"/><rect x="11.1" y="20.8" width="5.4" height="5.4" stroke="#3b3b3b" stroke-width="2"/><rect x="21.0" y="20.8" width="5.4" height="5.4" stroke="#3b3b3b" stroke-width="2"/></svg><svg style="position:absolute;left:1388.4px;top:318.5px;" width="12" height="7" viewBox="0 0 12 7" fill="none"><path d="M0 0H12L6.0 7Z" fill="#3b3b3b"/></svg><svg style="position:absolute;left:1425px;top:310px;" width="28" height="26" viewBox="0 0 28 26" fill="none"><path d="M7.5 24V3M1.8 9L7.5 3L13.2 9M20 2V23M14.3 17L20 23L25.7 17" stroke="#3b3b3b" stroke-width="2"/></svg><svg style="position:absolute;left:1466.8px;top:318.5px;" width="12" height="7" viewBox="0 0 12 7" fill="none"><path d="M0 0H12L6.0 7Z" fill="#3b3b3b"/></svg><svg style="position:absolute;left:2439px;top:305.5px;" width="30" height="32" viewBox="0 0 30 32" fill="none"><path d="M18.68 9.14A8.9 8.9 0 1 0 22.36 21.18" stroke="#3b3b3b" stroke-width="7.4" stroke-linecap="round"/><path d="M17.4 12.9L25.2 3.6L26 12.9Z" fill="#3b3b3b" stroke="#3b3b3b" stroke-width="3.6" stroke-linejoin="round"/><path d="M18.68 9.14A8.9 8.9 0 1 0 22.36 21.18" stroke="#fff" stroke-width="3.8" stroke-linecap="round"/><path d="M17.4 12.9L25.2 3.6L26 12.9Z" fill="#fff"/></svg><div style="position:absolute;left:2487px;top:308px;width:2px;height:28px;background:#d4d9df;"></div><svg style="position:absolute;left:2509px;top:310.6px;" width="30" height="24" viewBox="0 0 30 24" fill="none"><path d="M1 2.4H28.8M1 8.3H28.8M1 14.2H17M1 20.4H17" stroke="#3b3b3b" stroke-width="1.9"/><path d="M20 13.6L27.6 21.2M27.6 13.6L20 21.2" stroke="#3b3b3b" stroke-width="2"/></svg><div style="position:absolute;left:1316px;top:354px;width:1252px;height:63px;background:#fff;"></div><div style="position:absolute;left:1316px;top:417px;width:1252px;height:1px;background:#d6dae0;"></div><span class="t" style="left:1339.23px;top:373.00px;font-size:24px;color:#3b3b3b;letter-spacing:0.362px;">Python 3.10.13 (Venv: .venv)</span><svg style="position:absolute;left:1666.2px;top:383.5px;" width="12" height="7" viewBox="0 0 12 7" fill="none"><path d="M0 0H12L6.0 7Z" fill="#3b3b3b"/></svg><div style="position:absolute;left:2252px;top:362px;width:296px;height:48px;box-sizing:border-box;background:#fff;border:2px solid #c8cdd3;border-radius:8px;"></div><span class="t" style="left:2270.66px;top:373.00px;font-size:24px;color:#9b9b9b;letter-spacing:1.217px;">filter</span><div style="position:absolute;left:1316px;top:418px;width:1252px;height:316px;background:#fff;"></div><div style="position:absolute;left:1316px;top:465px;width:1236px;height:2px;background:#ebebeb;"></div><div style="position:absolute;left:1316px;top:517px;width:1236px;height:2px;background:#ebebeb;"></div><div style="position:absolute;left:1316px;top:569px;width:1236px;height:2px;background:#ebebeb;"></div><div style="position:absolute;left:1316px;top:621px;width:1236px;height:2px;background:#ebebeb;"></div><div style="position:absolute;left:1316px;top:673px;width:1236px;height:2px;background:#ebebeb;"></div><div style="position:absolute;left:1316px;top:725px;width:1236px;height:2px;background:#ebebeb;"></div><div style="position:absolute;left:1576px;top:418px;width:2px;height:316px;background:#ebebeb;"></div><svg style="position:absolute;left:1335.8px;top:428.7px;" width="14" height="23" viewBox="0 0 14 23" fill="none"><path d="M2 2L11 11.5L2 21" stroke="#3b3b3b" stroke-width="2"/></svg><span class="t" style="left:1368.41px;top:426.00px;font-size:26px;color:#3b3b3b;letter-spacing:0.703px;">gal_rings</span><span class="t" style="left:1594.23px;top:426.00px;font-size:26px;color:#3b3b3b;letter-spacing:0.648px;">&lt;SkyCoord (Galactic): (l, b, distance) in (deg, deg, kpc) [[( ...</span><span class="t" style="left:2353.43px;top:426.00px;font-size:26px;color:#6b6b6b;letter-spacing:0.331px;">SkyCoord [121]</span><svg style="position:absolute;left:1335.8px;top:480.7px;" width="14" height="23" viewBox="0 0 14 23" fill="none"><path d="M2 2L11 11.5L2 21" stroke="#3b3b3b" stroke-width="2"/></svg><span class="t" style="left:1368.41px;top:478.00px;font-size:26px;color:#3b3b3b;letter-spacing:0.681px;">galcen_distance</span><span class="t" style="left:1594.23px;top:478.00px;font-size:26px;color:#3b3b3b;letter-spacing:0.827px;">&lt;Quantity 8. kpc&gt;</span><span class="t" style="left:2375.78px;top:478.00px;font-size:26px;color:#6b6b6b;letter-spacing:1.146px;">Quantity [89]</span><svg style="position:absolute;left:1330.8px;top:538.05px;" width="22" height="13.5" viewBox="0 0 22 13.5" fill="none"><path d="M2 2L11.0 10.5L20 2" stroke="#3b3b3b" stroke-width="2" stroke-linejoin="miter"/></svg><span class="t" style="left:1368.41px;top:530.00px;font-size:26px;color:#3b3b3b;letter-spacing:0.938px;">gc_frame</span><span class="t" style="left:1594.23px;top:530.00px;font-size:26px;color:#3b3b3b;letter-spacing:0.466px;">&lt;Galactocentric Frame (galcen_coord=&lt;ICRS Coordina...</span><span class="t" style="left:2301.40px;top:530.00px;font-size:26px;color:#6b6b6b;letter-spacing:1.042px;">Galactocentric [64]</span><span class="t" style="left:1408.93px;top:582.00px;font-size:26px;color:#3b3b3b;">T</span><span class="t" style="left:1594.23px;top:582.00px;font-size:26px;color:#3b3b3b;letter-spacing:0.786px;">&lt;property object at 0x11a2278d0&gt;</span><span class="t" style="left:2434.14px;top:582.00px;font-size:26px;color:#6b6b6b;letter-spacing:0.807px;">property</span><span class="t" style="left:1408.41px;top:634.00px;font-size:26px;color:#3b3b3b;letter-spacing:0.767px;">cache</span><span class="t" style="left:1594.23px;top:634.00px;font-size:26px;color:#3b3b3b;letter-spacing:0.771px;">&lt;astropy.utils.decorators.lazyproperty object at 0x11aa84b20&gt;</span><span class="t" style="left:2385.06px;top:634.00px;font-size:26px;color:#6b6b6b;letter-spacing:0.770px;">lazyproperty</span><span class="t" style="left:1408.41px;top:686.00px;font-size:26px;color:#3b3b3b;letter-spacing:0.772px;">cartesian</span><span class="t" style="left:1594.23px;top:686.00px;font-size:26px;color:#3b3b3b;letter-spacing:0.786px;">&lt;property object at 0x11aa8e200&gt;</span><span class="t" style="left:2434.14px;top:686.00px;font-size:26px;color:#6b6b6b;letter-spacing:0.807px;">property</span><div style="position:absolute;left:2552px;top:444px;width:15px;height:40px;background:#c1c1c1;"></div><div style="position:absolute;left:1316px;top:734px;width:1252px;height:2px;background:#e5e5e5;"></div><div style="position:absolute;left:1316px;top:736px;width:1252px;height:42px;background:#f8f8f8;"></div><div style="position:absolute;left:1316px;top:778px;width:1252px;height:1px;background:#d6dae0;"></div><svg style="position:absolute;left:1324.8px;top:751.05px;" width="22" height="13.5" viewBox="0 0 22 13.5" fill="none"><path d="M2 2L11.0 10.5L20 2" stroke="#3b3b3b" stroke-width="2" stroke-linejoin="miter"/></svg><span class="t" style="left:1355.85px;top:745.00px;font-size:22px;color:#3b3b3b;font-weight:700;letter-spacing:0.216px;">PLOTS</span><div style="position:absolute;left:1316px;top:779px;width:1252px;height:62px;background:#fff;"></div><div style="position:absolute;left:1316px;top:841px;width:1252px;height:1px;background:#d6dae0;"></div><svg style="position:absolute;left:1355.5px;top:797px;" width="33" height="26" viewBox="0 0 33 26" fill="none"><path d="M1.5 13L13.5 1.3V7.8H25.5A5.2 5.2 0 0 1 30.7 13A5.2 5.2 0 0 1 25.5 18.2H13.5V24.7Z" stroke="#3b3b3b" stroke-width="2.1" stroke-linejoin="round"/></svg><svg style="position:absolute;left:1411.5px;top:797px;" width="33" height="26" viewBox="0 0 33 26" fill="none"><g transform="translate(32.5 0) scale(-1 1)"><path d="M1.5 13L13.5 1.3V7.8H25.5A5.2 5.2 0 0 1 30.7 13A5.2 5.2 0 0 1 25.5 18.2H13.5V24.7Z" stroke="#c5cdd6" stroke-width="2.1" stroke-linejoin="round"/></g></svg><div style="position:absolute;left:1461px;top:796px;width:2px;height:28px;background:#d4d9df;"></div><svg style="position:absolute;left:1483.5px;top:795.5px;" width="28.5" height="28.5" viewBox="0 0 28 28" fill="none"><path d="M4.5 1.5H23.5A3 3 0 0 1 26.5 4.5V23.5A3 3 0 0 1 23.5 26.5H4.5A3 3 0 0 1 1.5 23.5V4.5A3 3 0 0 1 4.5 1.5Z" stroke="#3b3b3b" stroke-width="2.1"/><path d="M6.5 1.5V9A2 2 0 0 0 8.5 11H19.5A2 2 0 0 0 21.5 9V1.5" stroke="#3b3b3b" stroke-width="2.1"/><path d="M7.5 26.5V19A2 2 0 0 1 9.5 17H18.5A2 2 0 0 1 20.5 19V26.5" stroke="#3b3b3b" stroke-width="2.1"/></svg><svg style="position:absolute;left:1541px;top:795px;" width="26" height="30" viewBox="0 0 26 30" fill="none"><path d="M5.5 5.5V3.5A2 2 0 0 1 7.5 1.5H14" stroke="#3b3b3b" stroke-width="2"/><path d="M1.5 24V5.5" stroke="#3b3b3b" stroke-width="0" /><path d="M1.8 23.5V6A4 4 0 0 1 5.8 2" stroke="#3b3b3b" stroke-width="2"/><path d="M6.5 7.5A2 2 0 0 1 8.5 5.5H17.5L24.3 12.3V26.5A2 2 0 0 1 22.3 28.5H8.5A2 2 0 0 1 6.5 26.5Z" stroke="#3b3b3b" stroke-width="2.1" stroke-linejoin="round"/></svg><svg style="position:absolute;left:1593px;top:793px;" width="34" height="34" viewBox="0 0 34 34" fill="none"><rect x="8" y="8" width="18" height="18" rx="1.5" stroke="#3b3b3b" stroke-width="2"/><path d="M12.6 22V17M17 22V12.5M21.4 22V15" stroke="#3b3b3b" stroke-width="1.9"/><path d="M17 0.8L20.4 4.6H13.6ZM17 33.2L20.4 29.4H13.6ZM0.8 17L4.6 13.6V20.4ZM33.2 17L29.4 13.6V20.4Z" fill="#3b3b3b"/></svg><span class="t" style="left:1637.53px;top:797.00px;font-size:24px;color:#3b3b3b;letter-spacing:0.336px;">Fit</span><svg style="position:absolute;left:1675.0px;top:806.5px;" width="12" height="7" viewBox="0 0 12 7" fill="none"><path d="M0 0H12L6.0 7Z" fill="#3b3b3b"/></svg><svg style="position:absolute;left:1713px;top:795px;" width="24" height="30" viewBox="0 0 24 30" fill="none"><rect x="1.8" y="1.5" width="19" height="27" rx="2.5" stroke="#3b3b3b" stroke-width="2.1"/><path d="M1.8 7.5H8M1.8 12.5H6M1.8 17.5H8M1.8 22.5H6" stroke="#3b3b3b" stroke-width="1.9"/></svg><span class="t" style="left:1754.25px;top:797.00px;font-size:24px;color:#3b3b3b;letter-spacing:0.588px;">Auto</span><svg style="position:absolute;left:1813.6px;top:806.5px;" width="12" height="7" viewBox="0 0 12 7" fill="none"><path d="M0 0H12L6.0 7Z" fill="#3b3b3b"/></svg><svg style="position:absolute;left:2418px;top:797px;" width="30" height="26" viewBox="0 0 30 26" fill="none"><rect x="1.8" y="1.6" width="9.4" height="22.4" rx="2" stroke="#3b3b3b" stroke-width="2.1"/><rect x="18" y="1.6" width="8.4" height="8" rx="2" stroke="#3b3b3b" stroke-width="2.1"/><rect x="18" y="16" width="8.4" height="8" rx="2" stroke="#3b3b3b" stroke-width="2.1"/></svg><svg style="position:absolute;left:2459.7px;top:806.5px;" width="12" height="7" viewBox="0 0 12 7" fill="none"><path d="M0 0H12L6.0 7Z" fill="#3b3b3b"/></svg><div style="position:absolute;left:2487px;top:796px;width:2px;height:28px;background:#d4d9df;"></div><svg style="position:absolute;left:2509px;top:798.6px;" width="30" height="24" viewBox="0 0 30 24" fill="none"><path d="M1 2.4H28.8M1 8.3H28.8M1 14.2H17M1 20.4H17" stroke="#3b3b3b" stroke-width="1.9"/><path d="M20 13.6L27.6 21.2M27.6 13.6L20 21.2" stroke="#3b3b3b" stroke-width="2"/></svg><div style="position:absolute;left:1316px;top:842px;width:1252px;height:730px;background:#fff;"></div><div style="position:absolute;left:2366px;top:842px;width:2px;height:730px;background:#e5e5e5;"></div><svg style="position:absolute;left:1316px;top:842px" width="1050" height="730" viewBox="1316 842 1050 730"><path d="M2203.2 880.4V1429.4" stroke="#a9a9a9" stroke-width="1.7"/><path d="M2086.2 880.4V1429.4" stroke="#a9a9a9" stroke-width="1.7"/><path d="M1969.2 880.4V1429.4" stroke="#a9a9a9" stroke-width="1.7"/><path d="M1852.1 880.4V1429.4" stroke="#a9a9a9" stroke-width="1.7"/><path d="M1735.1 880.4V1429.4" stroke="#a9a9a9" stroke-width="1.7"/><path d="M1618.1 880.4V1429.4" stroke="#a9a9a9" stroke-width="1.7"/><path d="M1501.1 880.4V1429.4" stroke="#a9a9a9" stroke-width="1.7"/><path d="M1478.6 960.6H2320.8" stroke="#a9a9a9" stroke-width="1.7"/><path d="M1478.6 1079.1H2320.8" stroke="#a9a9a9" stroke-width="1.7"/><path d="M1478.6 1197.6H2320.8" stroke="#a9a9a9" stroke-width="1.7"/><path d="M1478.6 1316.1H2320.8" stroke="#a9a9a9" stroke-width="1.7"/><clipPath id="axclip"><rect x="1478.6" y="880.4" width="842.2000000000003" height="549.0000000000001"/></clipPath><g clip-path="url(#axclip)"><path d="M2201.0 1384.7L2192.1 1382.4L2183.5 1379.8L2175.4 1376.9L2167.8 1373.8L2160.7 1370.4L2154.1 1366.9L2147.3 1362.6L2140.9 1358.2L2135.2 1353.7L2129.1 1348.3L2123.7 1343.0L2118.1 1336.7L2112.1 1329.3L2106.8 1322.2L2101.2 1313.8L2096.4 1306.2L2087.4 1290.0L2077.3 1269.3L2067.5 1246.7L2058.2 1223.5L2050.0 1201.2L2040.8 1175.2L2005.8 1070.4L1991.0 1027.5L1978.6 994.6L1969.7 973.3L1965.0 963.2L1960.3 953.5L1955.4 944.3L1950.4 935.9L1945.3 928.2L1940.1 921.4L1934.9 915.7L1929.5 911.1L1924.0 907.7L1918.5 905.7L1913.0 905.0L1907.4 905.7L1901.8 907.9L1896.1 911.5L1890.5 916.5L1884.9 922.8L1879.4 930.4L1873.9 939.1L1868.4 948.9L1863.1 959.7L1857.8 971.2L1847.5 996.2L1842.5 1009.4L1832.9 1036.4L1819.3 1077.3L1782.1 1194.8L1773.0 1222.1L1762.1 1252.9L1752.4 1278.2L1741.7 1303.4L1735.9 1315.7L1730.4 1326.3L1725.4 1335.5L1720.6 1343.5L1714.7 1352.5L1709.1 1360.0L1704.0 1366.2L1697.9 1372.7L1692.2 1378.0L1685.8 1383.1L1678.9 1387.7L1672.3 1391.2L1665.3 1394.4L1657.8 1397.0L1649.9 1399.2L1641.6 1400.8L1632.2 1402.2L1621.8 1403.2L1610.4 1403.8L1596.9 1404.1" stroke="#4a87ba" stroke-width="8" stroke-linecap="square" stroke-linejoin="round" fill="none"/><path d="M2176.1 1297.9L2165.3 1292.2L2154.2 1285.6L2144.4 1279.0L2134.2 1271.3L2124.5 1263.4L2114.5 1254.2L2105.0 1244.8L2095.0 1234.1L2086.9 1224.7L2078.4 1214.5L2061.6 1192.5L2046.1 1170.9L2009.0 1117.4L1992.5 1095.0L1984.8 1085.2L1976.9 1075.6L1968.8 1066.6L1962.5 1060.3L1954.1 1052.5L1947.6 1047.4L1941.0 1042.9L1934.3 1039.1L1927.6 1036.1L1920.7 1033.9L1913.9 1032.6L1907.0 1032.3L1900.1 1032.8L1893.2 1034.3L1886.3 1036.8L1881.7 1038.9L1877.2 1041.4L1870.4 1045.8L1861.4 1052.9L1852.5 1061.2L1843.9 1070.4L1837.5 1077.8L1831.2 1085.6L1823.0 1096.4L1815.0 1107.4L1799.8 1129.7L1762.4 1185.9L1751.8 1201.2L1741.8 1215.1L1731.0 1229.3L1720.7 1241.8L1711.0 1252.8L1700.7 1263.5L1691.9 1271.8L1682.4 1279.9L1672.4 1287.7L1662.8 1294.3L1652.6 1300.4L1642.9 1305.5L1632.6 1310.3L1621.8 1314.5" stroke="#7969a3" stroke-width="8" stroke-linecap="square" stroke-linejoin="round" fill="none"/><path d="M2161.3 1243.6L2145.6 1234.1L2130.1 1223.6L2114.9 1212.1L2099.0 1198.7L2084.4 1185.5L2069.0 1170.7L2021.5 1122.3L2005.4 1106.4L1988.5 1091.0L1980.5 1084.3L1972.4 1078.1L1962.5 1071.1L1954.1 1066.0L1945.5 1061.6L1936.9 1057.9L1928.2 1055.1L1921.1 1053.5L1912.3 1052.3L1905.2 1052.2L1898.1 1052.6L1889.2 1054.1L1882.1 1056.1L1873.3 1059.3L1866.3 1062.5L1857.6 1067.3L1849.0 1072.8L1840.5 1079.0L1833.8 1084.3L1825.5 1091.3L1817.4 1098.7L1807.9 1107.9L1791.0 1125.1L1755.7 1162.6L1740.1 1178.8L1722.9 1195.6L1707.8 1209.3L1699.0 1216.9L1690.3 1223.8L1681.9 1230.1L1672.8 1236.5L1663.9 1242.3L1655.2 1247.6L1645.8 1252.7L1636.6 1257.4" stroke="#981d2e" stroke-width="8" stroke-linecap="square" stroke-linejoin="round" fill="none"/><path d="M2151.7 1208.8L2139.1 1201.5L2127.2 1194.1L2114.8 1185.9L2102.1 1177.0L2090.1 1168.1L2076.5 1157.6L2031.3 1121.2L2014.1 1107.7L1996.2 1094.7L1987.7 1089.0L1979.0 1083.6L1968.8 1077.7L1958.3 1072.6L1949.3 1068.7L1940.1 1065.5L1930.9 1063.0L1921.6 1061.3L1912.2 1060.4L1904.4 1060.3L1896.6 1060.7L1887.2 1062.0L1879.4 1063.7L1870.1 1066.4L1860.9 1069.9L1851.7 1074.0L1842.6 1078.8L1832.1 1084.9L1816.0 1095.7L1798.9 1108.5L1781.1 1122.8L1734.3 1161.7L1719.1 1173.7L1705.6 1183.8L1690.4 1194.5L1675.8 1203.9L1660.8 1212.8L1646.2 1220.4" stroke="#507829" stroke-width="8" stroke-linecap="square" stroke-linejoin="round" fill="none"/></g><rect x="1478.6" y="880.4" width="842.2" height="549.0" stroke="#a9a9a9" stroke-width="2.7" fill="none"/><rect x="2041.15" y="897.75" width="262.7" height="206.9" rx="8" fill="#fff" fill-opacity="0.8" stroke="#d2d2d2" stroke-width="3.3"/><rect x="2048.9" y="920.1" width="75.3" height="8" fill="#4a87ba"/><rect x="2048.9" y="969.8" width="75.3" height="8" fill="#7969a3"/><rect x="2048.9" y="1019.5" width="75.3" height="8" fill="#981d2e"/><rect x="2048.9" y="1069.2" width="75.3" height="8" fill="#507829"/></svg><span class="t" style="left:2310.21px;top:1441.00px;font-size:33.33px;color:#555555;font-family:'DejaVu Sans', sans-serif;-webkit-text-stroke:0;">0</span><span class="t" style="left:2182.59px;top:1441.00px;font-size:33.33px;color:#555555;font-family:'DejaVu Sans', sans-serif;-webkit-text-stroke:0;">50</span><span class="t" style="left:2054.97px;top:1441.00px;font-size:33.33px;color:#555555;font-family:'DejaVu Sans', sans-serif;-webkit-text-stroke:0;">100</span><span class="t" style="left:1937.95px;top:1441.00px;font-size:33.33px;color:#555555;font-family:'DejaVu Sans', sans-serif;-webkit-text-stroke:0;">150</span><span class="t" style="left:1820.94px;top:1441.00px;font-size:33.33px;color:#555555;font-family:'DejaVu Sans', sans-serif;-webkit-text-stroke:0;">200</span><span class="t" style="left:1703.92px;top:1441.00px;font-size:33.33px;color:#555555;font-family:'DejaVu Sans', sans-serif;-webkit-text-stroke:0;">250</span><span class="t" style="left:1586.91px;top:1441.00px;font-size:33.33px;color:#555555;font-family:'DejaVu Sans', sans-serif;-webkit-text-stroke:0;">300</span><span class="t" style="left:1469.89px;top:1441.00px;font-size:33.33px;color:#555555;font-family:'DejaVu Sans', sans-serif;-webkit-text-stroke:0;">350</span><span class="t" style="left:1440.29px;top:943.00px;font-size:33.33px;color:#555555;font-family:'DejaVu Sans', sans-serif;-webkit-text-stroke:0;">2</span><span class="t" style="left:1440.29px;top:1061.00px;font-size:33.33px;color:#555555;font-family:'DejaVu Sans', sans-serif;-webkit-text-stroke:0;">0</span><span class="t" style="left:1412.37px;top:1180.00px;font-size:33.33px;color:#555555;font-family:'DejaVu Sans', sans-serif;-webkit-text-stroke:0;">−2</span><span class="t" style="left:1412.37px;top:1298.00px;font-size:33.33px;color:#555555;font-family:'DejaVu Sans', sans-serif;-webkit-text-stroke:0;">−4</span><span class="t" style="left:2144.57px;top:905.00px;font-size:33.33px;color:#000;font-family:'DejaVu Sans', sans-serif;-webkit-text-stroke:0;letter-spacing:0.345px;">10.0 kpc</span><span class="t" style="left:2144.57px;top:955.00px;font-size:33.33px;color:#000;font-family:'DejaVu Sans', sans-serif;-webkit-text-stroke:0;letter-spacing:0.345px;">15.0 kpc</span><span class="t" style="left:2145.77px;top:1005.00px;font-size:33.33px;color:#000;font-family:'DejaVu Sans', sans-serif;-webkit-text-stroke:0;letter-spacing:0.173px;">20.0 kpc</span><span class="t" style="left:2145.77px;top:1055.00px;font-size:33.33px;color:#000;font-family:'DejaVu Sans', sans-serif;-webkit-text-stroke:0;letter-spacing:0.173px;">25.0 kpc</span><span class="t" style="left:1835.50px;top:1486.00px;font-size:40px;color:#000;font-family:'DejaVu Sans', sans-serif;font-style:italic;-webkit-text-stroke:0;">l</span><span class="t" style="left:1858.30px;top:1486.00px;font-size:40px;color:#000;font-family:'DejaVu Sans', sans-serif;-webkit-text-stroke:0;letter-spacing:-0.100px;">[deg]</span><div style="position:absolute;left:1387.2px;top:1333.3px;width:0;height:0;transform-origin:0 0;transform:rotate(-90deg)"><span class="t" style="left:0.80px;top:-37.00px;font-size:40px;color:#000;font-family:'DejaVu Sans', sans-serif;font-style:italic;-webkit-text-stroke:0;">μ</span><span class="t" style="left:25.92px;top:-20.00px;font-size:28px;color:#000;font-family:'DejaVu Sans', sans-serif;font-style:italic;-webkit-text-stroke:0;">l</span><span class="t" style="left:41.40px;top:-37.00px;font-size:40px;color:#000;font-family:'DejaVu Sans', sans-serif;-webkit-text-stroke:0;letter-spacing:-0.400px;">cos</span><span class="t" style="left:115.76px;top:-37.00px;font-size:40px;color:#000;font-family:'DejaVu Sans', sans-serif;font-style:italic;-webkit-text-stroke:0;">b</span><span class="t" style="left:153.20px;top:-37.00px;font-size:40px;color:#000;font-family:'DejaVu Sans', sans-serif;-webkit-text-stroke:0;letter-spacing:-0.067px;">[mas</span><span class="t" style="left:259.74px;top:-37.00px;font-size:40px;color:#000;font-family:'DejaVu Sans', sans-serif;-webkit-text-stroke:0;">yr</span><span class="t" style="left:300.66px;top:-40.00px;font-size:28px;color:#000;font-family:'DejaVu Sans', sans-serif;-webkit-text-stroke:0;letter-spacing:-1.156px;">−1</span><span class="t" style="left:343.02px;top:-37.00px;font-size:40px;color:#000;font-family:'DejaVu Sans', sans-serif;-webkit-text-stroke:0;">]</span></div><svg style="position:absolute;left:2390px;top:900px" width="160" height="100" viewBox="2390 900 160 100"><path d="M2426.7 909.9V972.7" stroke="#d4d4d4" stroke-width="0.5"/><path d="M2440.6 909.9V972.7" stroke="#d4d4d4" stroke-width="0.5"/><path d="M2454.5 909.9V972.7" stroke="#d4d4d4" stroke-width="0.5"/><path d="M2423.6 962.5H2457.6" stroke="#d4d4d4" stroke-width="0.5"/><path d="M2423.6 941.3H2457.6" stroke="#d4d4d4" stroke-width="0.5"/><path d="M2423.6 920.1H2457.6" stroke="#d4d4d4" stroke-width="0.5"/><path d="M2441.2 930.7H2440.6A5.56 10.60 0 0 0 2440.6 951.9H2441.2" stroke="#5aa0d2" stroke-width="1.5" fill="none"/><path d="M2441.2 925.4H2440.6A8.34 15.90 0 0 0 2440.6 957.2H2441.2" stroke="#8a7ab8" stroke-width="1.5" fill="none"/><path d="M2441.2 920.1H2440.6A11.12 21.20 0 0 0 2440.6 962.5H2441.2" stroke="#b5384e" stroke-width="1.5" fill="none"/><path d="M2441.2 914.8H2440.6A13.90 26.50 0 0 0 2440.6 967.8H2441.2" stroke="#5c8a3c" stroke-width="1.5" fill="none"/><rect x="2423.6" y="909.9" width="34.0" height="62.8" stroke="#d4d4d4" stroke-width="0.7" fill="none"/><circle cx="2441" cy="937.7" r="2.9" stroke="#333" stroke-width="0.7" fill="none"/><circle cx="2441" cy="937.7" r="0.6" fill="#333"/><path d="M2517.6 909.9V972.7" stroke="#d4d4d4" stroke-width="0.5"/><path d="M2500.4 966.8H2534.5" stroke="#d4d4d4" stroke-width="0.5"/><path d="M2500.4 941.3H2534.5" stroke="#d4d4d4" stroke-width="0.5"/><path d="M2500.4 915.8H2534.5" stroke="#d4d4d4" stroke-width="0.5"/><path d="M2502.5 941.7V941.3A15.1 28 0 0 1 2532.7 941.3V941.7" stroke="#6f9a52" stroke-width="1.5" fill="none"/><rect x="2500.4" y="909.9" width="34.1" height="62.8" stroke="#d4d4d4" stroke-width="0.7" fill="none"/></svg><span class="t" style="left:2419.90px;top:975.75px;font-size:6.3px;color:#999;font-family:'DejaVu Sans', sans-serif;-webkit-text-stroke:0;">−25</span><span class="t" style="left:2438.60px;top:975.75px;font-size:6.3px;color:#999;font-family:'DejaVu Sans', sans-serif;-webkit-text-stroke:0;">0</span><span class="t" style="left:2450.54px;top:975.75px;font-size:6.3px;color:#999;font-family:'DejaVu Sans', sans-serif;-webkit-text-stroke:0;">25</span><span class="t" style="left:2412.60px;top:916.65px;font-size:6.3px;color:#999;font-family:'DejaVu Sans', sans-serif;-webkit-text-stroke:0;">20</span><span class="t" style="left:2416.61px;top:937.85px;font-size:6.3px;color:#999;font-family:'DejaVu Sans', sans-serif;-webkit-text-stroke:0;">0</span><span class="t" style="left:2407.32px;top:959.05px;font-size:6.3px;color:#999;font-family:'DejaVu Sans', sans-serif;-webkit-text-stroke:0;">−20</span><span class="t" style="left:2492.23px;top:975.75px;font-size:6.3px;color:#999;font-family:'DejaVu Sans', sans-serif;-webkit-text-stroke:0;">−250</span><span class="t" style="left:2515.60px;top:975.75px;font-size:6.3px;color:#999;font-family:'DejaVu Sans', sans-serif;-webkit-text-stroke:0;">0</span><span class="t" style="left:2528.27px;top:975.75px;font-size:6.3px;color:#999;font-family:'DejaVu Sans', sans-serif;-webkit-text-stroke:0;">250</span><span class="t" style="left:2485.40px;top:912.35px;font-size:6.3px;color:#999;font-family:'DejaVu Sans', sans-serif;-webkit-text-stroke:0;">200</span><span class="t" style="left:2493.41px;top:937.85px;font-size:6.3px;color:#999;font-family:'DejaVu Sans', sans-serif;-webkit-text-stroke:0;">0</span><span class="t" style="left:2480.12px;top:963.35px;font-size:6.3px;color:#999;font-family:'DejaVu Sans', sans-serif;-webkit-text-stroke:0;">−200</span><span class="t" style="left:2427.50px;top:985.55px;font-size:7.6px;color:#555;font-family:'DejaVu Sans', sans-serif;font-style:italic;-webkit-text-stroke:0;">x</span><span class="t" style="left:2434.35px;top:985.55px;font-size:7.6px;color:#555;font-family:'DejaVu Sans', sans-serif;-webkit-text-stroke:0;">[kpc]</span><span class="t" style="left:2496.26px;top:985.55px;font-size:7.6px;color:#555;font-family:'DejaVu Sans', sans-serif;font-style:italic;-webkit-text-stroke:0;">v</span><span class="t" style="left:2501.20px;top:989.08px;font-size:5.3px;color:#555;font-family:'DejaVu Sans', sans-serif;font-style:italic;-webkit-text-stroke:0;">x</span><span class="t" style="left:2506.75px;top:985.55px;font-size:7.6px;color:#555;font-family:'DejaVu Sans', sans-serif;-webkit-text-stroke:0;">[km s</span><span class="t" style="left:2528.04px;top:984.88px;font-size:5.3px;color:#555;font-family:'DejaVu Sans', sans-serif;-webkit-text-stroke:0;">−1</span><span class="t" style="left:2536.06px;top:985.55px;font-size:7.6px;color:#555;font-family:'DejaVu Sans', sans-serif;-webkit-text-stroke:0;">]</span><div style="position:absolute;left:2402.4px;top:954.8px;width:0;height:0;transform-origin:0 0;transform:rotate(-90deg)"><span class="t" style="left:0.00px;top:-7.05px;font-size:7.6px;color:#555;font-family:'DejaVu Sans', sans-serif;font-style:italic;-webkit-text-stroke:0;">y</span><span class="t" style="left:6.85px;top:-7.05px;font-size:7.6px;color:#555;font-family:'DejaVu Sans', sans-serif;-webkit-text-stroke:0;">[kpc]</span></div><div style="position:absolute;left:2473.8px;top:962.4px;width:0;height:0;transform-origin:0 0;transform:rotate(-90deg)"><span class="t" style="left:-0.54px;top:-7.05px;font-size:7.6px;color:#555;font-family:'DejaVu Sans', sans-serif;font-style:italic;-webkit-text-stroke:0;">v</span><span class="t" style="left:4.40px;top:-3.52px;font-size:5.3px;color:#555;font-family:'DejaVu Sans', sans-serif;font-style:italic;-webkit-text-stroke:0;">y</span><span class="t" style="left:9.85px;top:-7.05px;font-size:7.6px;color:#555;font-family:'DejaVu Sans', sans-serif;-webkit-text-stroke:0;">[km s</span><span class="t" style="left:31.04px;top:-7.72px;font-size:5.3px;color:#555;font-family:'DejaVu Sans', sans-serif;-webkit-text-stroke:0;">−1</span><span class="t" style="left:39.16px;top:-7.05px;font-size:7.6px;color:#555;font-family:'DejaVu Sans', sans-serif;-webkit-text-stroke:0;">]</span></div><div style="position:absolute;left:2386px;top:1075px;width:164px;height:113.5px;box-sizing:border-box;border:2px solid #c4c4c4;border-radius:7px;background:#fff;"></div><svg style="position:absolute;left:2386px;top:1075px" width="164" height="114" viewBox="2386 1075 164 114"><path d="M2523.1 1082.5V1165.3" stroke="#c4c4c4" stroke-width="0.6"/><path d="M2505.2 1082.5V1165.3" stroke="#c4c4c4" stroke-width="0.6"/><path d="M2487.4 1082.5V1165.3" stroke="#c4c4c4" stroke-width="0.6"/><path d="M2469.5 1082.5V1165.3" stroke="#c4c4c4" stroke-width="0.6"/><path d="M2451.7 1082.5V1165.3" stroke="#c4c4c4" stroke-width="0.6"/><path d="M2433.8 1082.5V1165.3" stroke="#c4c4c4" stroke-width="0.6"/><path d="M2416.0 1082.5V1165.3" stroke="#c4c4c4" stroke-width="0.6"/><path d="M2412.6 1094.6H2541.0" stroke="#c4c4c4" stroke-width="0.6"/><path d="M2412.6 1112.5H2541.0" stroke="#c4c4c4" stroke-width="0.6"/><path d="M2412.6 1130.4H2541.0" stroke="#c4c4c4" stroke-width="0.6"/><path d="M2412.6 1148.2H2541.0" stroke="#c4c4c4" stroke-width="0.6"/><path d="M2522.75 1158.65L2520.08 1157.90L2517.68 1156.99L2515.59 1155.95L2513.58 1154.64L2511.78 1153.14L2510.09 1151.39L2508.37 1149.19L2506.79 1146.77L2505.42 1144.33L2503.87 1141.20L2500.96 1134.27L2498.31 1126.97L2490.71 1104.63L2488.82 1099.66L2486.75 1094.92L2484.52 1090.78L2482.96 1088.60L2481.33 1087.04L2480.50 1086.53L2479.66 1086.22L2478.81 1086.12L2477.96 1086.23L2477.10 1086.56L2476.24 1087.10L2474.54 1088.81L2472.85 1091.28L2470.39 1096.13L2468.82 1099.91L2466.59 1105.99L2458.85 1129.94L2455.80 1138.72L2452.68 1146.35L2450.97 1149.82L2449.47 1152.41L2447.72 1154.91L2446.01 1156.83L2444.17 1158.40L2442.11 1159.63L2439.89 1160.51L2437.42 1161.09L2434.40 1161.44L2430.60 1161.58" stroke="#4a87ba" stroke-width="1.4" stroke-linecap="square" fill="none"/><path d="M2518.95 1145.53L2515.60 1143.66L2512.55 1141.51L2509.54 1138.92L2506.57 1135.87L2504.05 1132.91L2501.48 1129.59L2490.95 1114.84L2488.57 1111.92L2486.37 1109.60L2484.09 1107.65L2482.06 1106.39L2480.00 1105.61L2477.90 1105.36L2475.80 1105.67L2474.74 1106.04L2473.35 1106.74L2470.94 1108.48L2468.27 1111.12L2466.34 1113.42L2463.87 1116.72L2455.85 1128.59L2452.70 1133.00L2449.49 1137.04L2446.43 1140.32L2443.65 1142.81L2440.65 1144.97L2437.61 1146.68L2434.40 1148.03" stroke="#7969a3" stroke-width="1.4" stroke-linecap="square" fill="none"/><path d="M2516.69 1137.31L2511.93 1134.29L2507.18 1130.52L2502.61 1126.29L2492.91 1116.57L2490.32 1114.24L2487.87 1112.28L2485.08 1110.46L2482.46 1109.23L2480.05 1108.56L2477.62 1108.37L2475.18 1108.67L2472.76 1109.45L2470.36 1110.66L2467.75 1112.42L2465.47 1114.29L2462.78 1116.79L2452.44 1127.51L2447.53 1132.13L2444.85 1134.31L2442.18 1136.24L2439.49 1137.91L2436.66 1139.39" stroke="#981d2e" stroke-width="1.4" stroke-linecap="square" fill="none"/><path d="M2515.22 1132.05L2511.48 1129.83L2507.66 1127.24L2503.76 1124.31L2494.23 1116.77L2491.50 1114.80L2488.88 1113.11L2485.73 1111.45L2482.95 1110.39L2480.12 1109.75L2477.51 1109.59L2474.89 1109.85L2472.28 1110.52L2469.46 1111.68L2466.48 1113.32L2464.02 1114.95L2461.42 1116.88L2451.55 1124.93L2447.18 1128.28L2442.64 1131.31L2438.12 1133.81" stroke="#507829" stroke-width="1.4" stroke-linecap="square" fill="none"/><rect x="2412.6" y="1082.5" width="128.5" height="82.8" stroke="#c4c4c4" stroke-width="0.7" fill="none"/><rect x="2498.5" y="1085.3" width="39.9" height="30.9" rx="1" fill="#fff" fill-opacity="0.8" stroke="#e2e2e2" stroke-width="0.6"/><rect x="2499.5" y="1088.37" width="11.5" height="1.5" fill="#4a87ba"/><rect x="2499.5" y="1095.86" width="11.5" height="1.5" fill="#7969a3"/><rect x="2499.5" y="1103.36" width="11.5" height="1.5" fill="#981d2e"/><rect x="2499.5" y="1110.85" width="11.5" height="1.5" fill="#507829"/></svg><span class="t" style="left:2539.30px;top:1166.98px;font-size:5.1px;color:#777;font-family:'DejaVu Sans', sans-serif;-webkit-text-stroke:0;">0</span><span class="t" style="left:2519.80px;top:1166.98px;font-size:5.1px;color:#777;font-family:'DejaVu Sans', sans-serif;-webkit-text-stroke:0;">50</span><span class="t" style="left:2500.25px;top:1166.98px;font-size:5.1px;color:#777;font-family:'DejaVu Sans', sans-serif;-webkit-text-stroke:0;">100</span><span class="t" style="left:2482.41px;top:1166.98px;font-size:5.1px;color:#777;font-family:'DejaVu Sans', sans-serif;-webkit-text-stroke:0;">150</span><span class="t" style="left:2464.65px;top:1166.98px;font-size:5.1px;color:#777;font-family:'DejaVu Sans', sans-serif;-webkit-text-stroke:0;">200</span><span class="t" style="left:2446.80px;top:1166.98px;font-size:5.1px;color:#777;font-family:'DejaVu Sans', sans-serif;-webkit-text-stroke:0;">250</span><span class="t" style="left:2428.95px;top:1166.98px;font-size:5.1px;color:#777;font-family:'DejaVu Sans', sans-serif;-webkit-text-stroke:0;">300</span><span class="t" style="left:2411.10px;top:1166.98px;font-size:5.1px;color:#777;font-family:'DejaVu Sans', sans-serif;-webkit-text-stroke:0;">350</span><span class="t" style="left:2406.77px;top:1091.76px;font-size:5.1px;color:#777;font-family:'DejaVu Sans', sans-serif;-webkit-text-stroke:0;">2</span><span class="t" style="left:2406.60px;top:1109.62px;font-size:5.1px;color:#777;font-family:'DejaVu Sans', sans-serif;-webkit-text-stroke:0;">0</span><span class="t" style="left:2402.50px;top:1127.49px;font-size:5.1px;color:#777;font-family:'DejaVu Sans', sans-serif;-webkit-text-stroke:0;">−2</span><span class="t" style="left:2402.27px;top:1145.36px;font-size:5.1px;color:#777;font-family:'DejaVu Sans', sans-serif;-webkit-text-stroke:0;">−4</span><span class="t" style="left:2514.07px;top:1086.26px;font-size:5.1px;color:#222;font-family:'DejaVu Sans', sans-serif;-webkit-text-stroke:0;">10.0 kpc</span><span class="t" style="left:2514.07px;top:1093.75px;font-size:5.1px;color:#222;font-family:'DejaVu Sans', sans-serif;-webkit-text-stroke:0;">15.0 kpc</span><span class="t" style="left:2514.26px;top:1101.24px;font-size:5.1px;color:#222;font-family:'DejaVu Sans', sans-serif;-webkit-text-stroke:0;">20.0 kpc</span><span class="t" style="left:2514.26px;top:1108.74px;font-size:5.1px;color:#222;font-family:'DejaVu Sans', sans-serif;-webkit-text-stroke:0;">25.0 kpc</span><span class="t" style="left:2466.95px;top:1173.74px;font-size:6.1px;color:#222;font-family:'DejaVu Sans', sans-serif;font-style:italic;-webkit-text-stroke:0;">l</span><span class="t" style="left:2470.43px;top:1173.74px;font-size:6.1px;color:#222;font-family:'DejaVu Sans', sans-serif;-webkit-text-stroke:0;">[deg]</span><div style="position:absolute;left:2398.6px;top:1150.8px;width:0;height:0;transform-origin:0 0;transform:rotate(-90deg)"><span class="t" style="left:0.00px;top:-5.57px;font-size:6px;color:#222;font-family:'DejaVu Sans', sans-serif;font-style:italic;-webkit-text-stroke:0;">μ</span><span class="t" style="left:3.85px;top:-2.90px;font-size:4.2px;color:#222;font-family:'DejaVu Sans', sans-serif;font-style:italic;-webkit-text-stroke:0;">l</span><span class="t" style="left:6.17px;top:-5.57px;font-size:6px;color:#222;font-family:'DejaVu Sans', sans-serif;-webkit-text-stroke:0;">cos</span><span class="t" style="left:17.38px;top:-5.57px;font-size:6px;color:#222;font-family:'DejaVu Sans', sans-serif;font-style:italic;-webkit-text-stroke:0;">b</span><span class="t" style="left:23.09px;top:-5.57px;font-size:6px;color:#222;font-family:'DejaVu Sans', sans-serif;-webkit-text-stroke:0;">[mas</span><span class="t" style="left:39.13px;top:-5.57px;font-size:6px;color:#222;font-family:'DejaVu Sans', sans-serif;-webkit-text-stroke:0;">yr</span><span class="t" style="left:45.26px;top:-6.10px;font-size:4.2px;color:#222;font-family:'DejaVu Sans', sans-serif;-webkit-text-stroke:0;">−1</span><span class="t" style="left:51.62px;top:-5.57px;font-size:6px;color:#222;font-family:'DejaVu Sans', sans-serif;-webkit-text-stroke:0;">]</span></div><div style="position:absolute;left:68px;top:1572px;width:2500px;height:2px;background:#e5e5e5;"></div><div style="position:absolute;left:68px;top:1574px;width:2500px;height:42px;background:#f8f8f8;"></div><svg style="position:absolute;left:99px;top:1581px;" width="26" height="26" viewBox="0 0 26 26" fill="none"><circle cx="13" cy="13" r="10.9" stroke="#3b3b3b" stroke-width="1.9"/><path d="M8.3 8.3L17.7 17.7M17.7 8.3L8.3 17.7" stroke="#3b3b3b" stroke-width="2"/></svg><span class="t" style="left:133.76px;top:1581.00px;font-size:24px;color:#3b3b3b;">0</span><svg style="position:absolute;left:156px;top:1580.6px;" width="26" height="26" viewBox="0 0 26 26" fill="none"><path d="M13 2.2L24 23.3H2Z" stroke="#3b3b3b" stroke-width="1.9" stroke-linejoin="round"/><path d="M13 9.5V16.8" stroke="#3b3b3b" stroke-width="2.1"/><circle cx="13" cy="19.8" r="1.3" fill="#3b3b3b"/></svg><span class="t" style="left:190.36px;top:1581.00px;font-size:24px;color:#3b3b3b;">0</span><svg style="position:absolute;left:239px;top:1580.5px;" width="26" height="28" viewBox="0 0 26 28" fill="none"><circle cx="12.5" cy="9" r="2.1" stroke="#3b3b3b" stroke-width="1.6"/><path d="M12.5 11.1L6.4 25.2M12.5 11.1L18.6 25.2M8.4 20.6H16.6" stroke="#3b3b3b" stroke-width="1.8"/><path d="M7.9 4.2A6.6 6.6 0 0 0 7.9 13.8M17.1 4.2A6.6 6.6 0 0 1 17.1 13.8M4.2 1.6A10.6 10.6 0 0 0 4.2 16.4M20.8 1.6A10.6 10.6 0 0 1 20.8 16.4" stroke="#3b3b3b" stroke-width="1.6"/></svg><span class="t" style="left:272.06px;top:1581.00px;font-size:24px;color:#3b3b3b;">0</span><span class="t" style="left:1872.23px;top:1581.00px;font-size:24px;color:#3b3b3b;letter-spacing:0.804px;">Ln 206, Col 1</span><span class="t" style="left:2058.02px;top:1581.00px;font-size:24px;color:#3b3b3b;letter-spacing:0.518px;">Spaces: 4</span><span class="t" style="left:2201.35px;top:1581.00px;font-size:24px;color:#3b3b3b;letter-spacing:1.347px;">UTF-8</span><span class="t" style="left:2306.03px;top:1581.00px;font-size:24px;color:#3b3b3b;letter-spacing:-0.080px;">LF</span><span class="t" style="left:2365.63px;top:1582.00px;font-size:23px;color:#3b3b3b;letter-spacing:6.118px;">{}</span><span class="t" style="left:2401.53px;top:1581.00px;font-size:24px;color:#3b3b3b;letter-spacing:1.198px;">Python</span><svg style="position:absolute;left:2512px;top:1581px;" width="24" height="28" viewBox="0 0 24 28" fill="none"><path d="M3 21.6H21L19.2 17.4V11.2A7.2 7.2 0 0 0 4.8 11.2V17.4Z" stroke="#3b3b3b" stroke-width="1.9" stroke-linejoin="round"/><path d="M9.4 22A2.7 2.7 0 0 0 14.6 22" stroke="#3b3b3b" stroke-width="1.9"/></svg>
</div></div></body></html>
